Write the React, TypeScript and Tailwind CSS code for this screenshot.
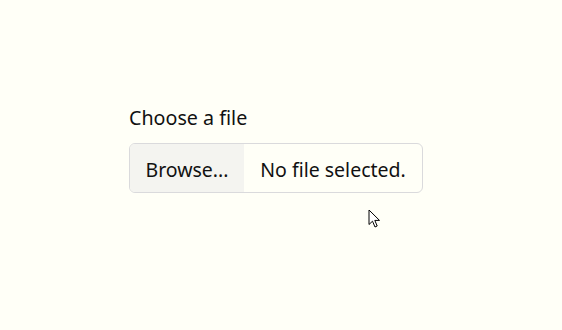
export default function App() {
  return (
    <div className="relative w-[562px] h-[330px] bg-[#fffff7] overflow-hidden" style={{ fontFamily: '"Segoe UI", "Noto Sans", "Open Sans", sans-serif' }}>
      <div className="pl-[129px] pt-[105px]">
        <div className="text-[19.7px] leading-[26px] text-[#111]">Choose a file</div>
        <div className="mt-[12px] flex w-[294px] h-[50px] rounded-[6px] border border-[#dadadc] overflow-hidden text-[19.5px] text-[#111]">
          <div className="flex items-center w-[114px] justify-center pt-[3px] bg-[#f4f4f0]">Browse...</div>
          <div className="flex items-center flex-1 justify-center pt-[3px]">No file selected.</div>
        </div>
      </div>
      <svg className="absolute left-[368px] top-[209px]" width="13" height="20" viewBox="0 0 13 20">
        <path d="M1 1 L1 15.5 L4.5 12.2 L7 18 L9.2 17 L6.8 11.4 L11.5 11.4 Z" fill="#fff" stroke="#000" strokeWidth="1" strokeLinejoin="round" />
      </svg>
    </div>
  );
}
